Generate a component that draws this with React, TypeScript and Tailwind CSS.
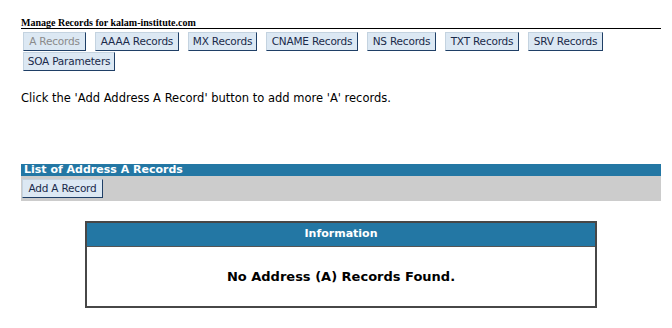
const tabs = [
  { label: "A Records", w: "w-[63px]" },
  { label: "AAAA Records", w: "w-[84px]" },
  { label: "MX Records", w: "w-[69px]" },
  { label: "CNAME Records", w: "w-[92px]" },
  { label: "NS Records", w: "w-[69px]" },
  { label: "TXT Records", w: "w-[74px]" },
  { label: "SRV Records", w: "w-[75px]" },
  { label: "SOA Parameters", w: "w-[92px]" },
];

function Tab({ label, w, disabled }: { label: string; w: string; disabled?: boolean }) {
  return (
    <button
      className={`${w} h-[19px] flex items-center justify-center bg-[#dce8f3] border border-t-[#c4d3e0] border-l-[#c4d3e0] border-r-[#1f3f66] border-b-[#1f3f66] text-[10.5px] leading-none whitespace-nowrap tracking-[-0.2px] ${
        disabled ? "text-[#8a8a8a]" : "text-[#1a2a4a]"
      }`}
      style={{ fontFamily: "Tahoma, 'DejaVu Sans', sans-serif" }}
    >
      {label}
    </button>
  );
}

export default function App() {
  return (
    <div
      className="w-[672px] h-[328px] bg-white pl-[21px] pr-[11px] pt-[17px] text-black"
      style={{ fontFamily: "Verdana, 'DejaVu Sans', sans-serif" }}
    >
      <div
        className="border-b border-black text-[10px] font-bold leading-[11px]"
        style={{ fontFamily: "'Liberation Serif', serif" }}
      >
        Manage Records for kalam-institute.com
      </div>
      <div className="flex flex-wrap gap-x-[9px] gap-y-[1px] pl-[2px] pt-[3px] w-[600px]">
        {tabs.map((t, i) => (
          <Tab key={t.label} label={t.label} w={t.w} disabled={i === 0} />
        ))}
      </div>
      <p className="mt-[20px] text-[11.5px] leading-[14px]">
        Click the 'Add Address A Record' button to add more 'A' records.
      </p>
      <div className="mt-[59px]">
        <div className="h-[12px] bg-[#2377a4] text-white text-[11px] font-bold leading-[12px] pl-[3px]">
          List of Address A Records
        </div>
        <div className="h-[25px] bg-[#cccccc] pt-[3px] pl-[1px] flex items-start">
          <Tab label="Add A Record" w="w-[81px]" />
        </div>
      </div>
      <div className="mt-[20px] ml-[64px] w-[512px] h-[87px] border-2 border-[#474747] flex flex-col">
        <div className="h-[24px] bg-[#2377a4] border-b border-[#555] text-white text-[11px] font-bold flex items-center justify-center">
          Information
        </div>
        <div className="flex-1 flex items-center justify-center text-[13px] font-bold">
          No Address (A) Records Found.
        </div>
      </div>
    </div>
  );
}
